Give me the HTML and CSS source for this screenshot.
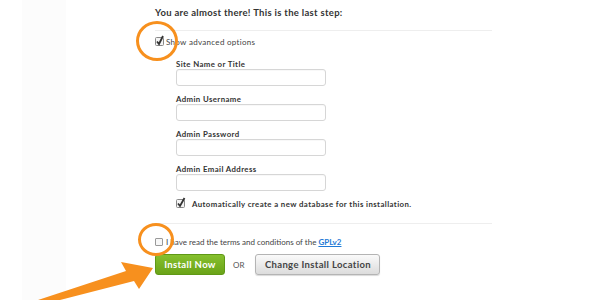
FILE: index.html
```html
<!DOCTYPE html>
<html lang="en">
<head>
  <meta charset="UTF-8">
  <title>Install</title>
  <link rel="stylesheet" href="styles.css">
</head>
<body>
  <div class="shade"></div>
  <div class="page">
    <h2 class="title">You are almost there! This is the last step:</h2>
    <div class="rule"></div>

    <label class="check-row">
      <svg class="box" width="9" height="11" viewBox="0 0 9 11">
        <rect x="0.5" y="2.5" width="8" height="8" rx="1" fill="#f4f4f4" stroke="#888"/>
        <path d="M2 6.5 L4 9 L8 1" fill="none" stroke="#333" stroke-width="1.8"/>
      </svg>
      <span>Show advanced options</span>
    </label>

    <div class="fields">
      <div class="field">
        <div class="label">Site Name or Title</div>
        <div class="input"></div>
      </div>
      <div class="field">
        <div class="label">Admin Username</div>
        <div class="input"></div>
      </div>
      <div class="field">
        <div class="label">Admin Password</div>
        <div class="input"></div>
      </div>
      <div class="field">
        <div class="label">Admin Email Address</div>
        <div class="input"></div>
      </div>

      <label class="check-row db">
        <svg class="box" width="10" height="11" viewBox="0 0 10 11">
          <rect x="0.5" y="2.5" width="8" height="8" rx="1" fill="#f4f4f4" stroke="#888"/>
          <path d="M2 6.5 L4 9 L8.5 1" fill="none" stroke="#333" stroke-width="1.8"/>
        </svg>
        <span>Automatically create a new database for this installation.</span>
      </label>
    </div>

    <div class="rule second"></div>

    <label class="check-row terms">
      <span class="empty-box"></span>
      <span>I have read the terms and conditions of the <a href="#">GPLv2</a></span>
    </label>

    <div class="actions">
      <a class="btn install" href="#">Install Now</a>
      <span class="or">OR</span>
      <a class="btn change" href="#">Change Install Location</a>
    </div>
  </div>

  <!-- orange annotations drawn over the screenshot -->
  <div class="ring ring-top"></div>
  <div class="ring ring-bottom"></div>
  <svg class="arrow" width="600" height="300" viewBox="0 0 600 300">
    <polygon points="38,300 126,271 121,262 153,268 139,289 134,281 60,300" fill="#f7901e"/>
  </svg>
</body>
</html>
```

FILE: styles.css
```css
* {
  box-sizing: border-box;
}

body {
  margin: 0;
  width: 600px;
  height: 300px;
  overflow: hidden;
  background-color: #ffffff;
  font-family: 'Lato', 'Liberation Sans', sans-serif;
  color: #3a3a3a;
  position: relative;
}

.shade {
  position: absolute;
  left: 22px;
  top: 0;
  width: 44px;
  height: 300px;
  background-color: #fcfcfc;
}

.page {
  position: relative;
  padding: 7px 0 0 155px;
}

.title {
  margin: 0;
  font-size: 9.5px;
  line-height: 12px;
  font-weight: 700;
  letter-spacing: 0.3px;
  color: #333;
}

.rule {
  width: 337px;
  height: 1px;
  margin-top: 11px;
  background-color: #eeeeee;
}

.rule.second {
  margin-top: 13px;
}

.check-row {
  display: flex;
  align-items: center;
  height: 12px;
  margin-top: 5px;
  font-size: 8px;
  letter-spacing: 0.3px;
  color: #444;
}

.check-row .box {
  margin-right: 2px;
  margin-top: -3px;
}

.fields {
  margin-left: 21px;
  margin-top: 11px;
}

.field {
  margin-bottom: 8px;
}

.label {
  height: 10px;
  line-height: 10px;
  font-size: 7.8px;
  font-weight: 700;
  letter-spacing: 0.4px;
  color: #333;
}

.input {
  width: 150px;
  height: 17px;
  border: 1px solid #d6d6d6;
  border-radius: 3px;
  background-color: #fff;
  box-shadow: inset 0 1px 1px rgba(0,0,0,0.03);
}

.check-row.db {
  margin-top: -1px;
  font-weight: 700;
  font-size: 7.8px;
  letter-spacing: 0.42px;
  color: #333;
}

.check-row.db .box {
  margin-right: 6px;
}

.check-row.terms {
  margin-top: 12px;
  letter-spacing: 0;
}

.empty-box {
  width: 8px;
  height: 8px;
  border: 1px solid #999;
  border-radius: 1px;
  background-color: #f7f7f7;
  margin-right: 3px;
}

.terms a {
  color: #1f7ad6;
  font-weight: 700;
}

.actions {
  display: flex;
  align-items: center;
  margin-top: 6px;
}

.btn {
  display: block;
  height: 21px;
  line-height: 19px;
  border-radius: 3px;
  font-size: 9.5px;
  font-weight: 700;
  letter-spacing: 0.35px;
  text-align: center;
  text-decoration: none;
}

.install {
  width: 70px;
  background: linear-gradient(#86c02e, #6aa318);
  border: 1px solid #5f9816;
  color: #fff;
}

.or {
  margin: 0 11px 0 8px;
  font-size: 8px;
  color: #555;
}

.change {
  width: 125px;
  background: linear-gradient(#fafafa, #dcdcdc);
  border: 1px solid #b4b4b4;
  color: #444;
  box-shadow: 0 1px 1px rgba(0,0,0,0.15);
}

.ring {
  position: absolute;
  border: 3px solid #f7901e;
  border-radius: 50%;
}

.ring-top {
  left: 136px;
  top: 21px;
  width: 42px;
  height: 40px;
}

.ring-bottom {
  left: 138px;
  top: 223px;
  width: 36px;
  height: 33px;
}

.arrow {
  position: absolute;
  left: 0;
  top: 0;
}
```
